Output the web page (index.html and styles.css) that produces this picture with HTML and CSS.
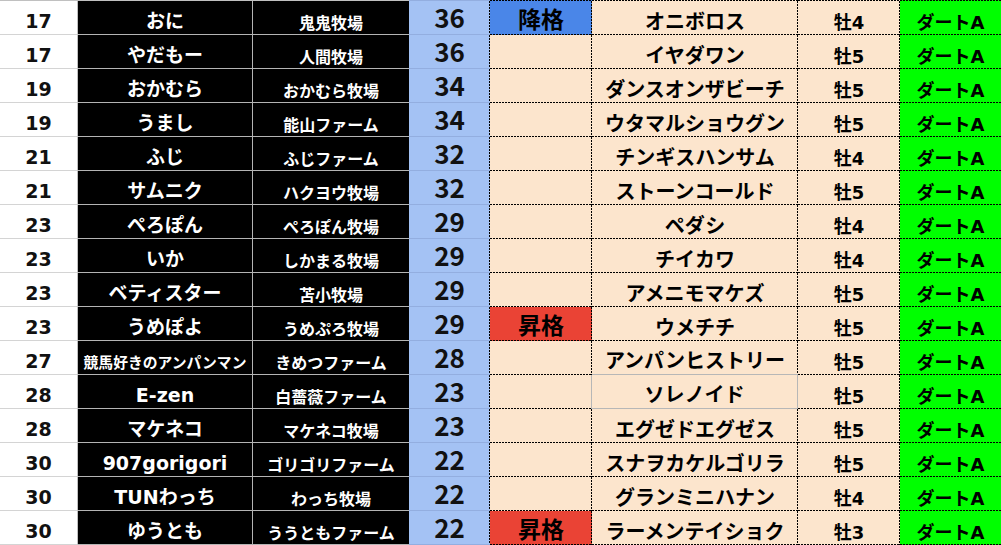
FILE: index.html
```html
<!DOCTYPE html>
<html lang="ja">
<head>
<meta charset="utf-8">
<title>ランキング</title>
<link rel="stylesheet" href="styles.css">
</head>
<body>
<div class="sheet">
  <div class="row top">
    <div class="t t1"></div><div class="t t1"></div><div class="t t1"></div><div class="t t4"></div>
    <div class="t tdash tblue"></div><div class="t tdash tpeach"></div><div class="t tdash tpeach"></div><div class="t tdash tgreen"></div>
  </div>

  <div class="row">
    <div class="c k1">17</div><div class="c k2">おに</div><div class="c k3">鬼鬼牧場</div><div class="c k4">36</div>
    <div class="c k5 down">降格</div><div class="c k6">オニボロス</div><div class="c k7">牡4</div><div class="c k8">ダートA</div>
  </div>
  <div class="row">
    <div class="c k1">17</div><div class="c k2">やだもー</div><div class="c k3">人間牧場</div><div class="c k4">36</div>
    <div class="c k5"></div><div class="c k6">イヤダワン</div><div class="c k7">牡5</div><div class="c k8">ダートA</div>
  </div>
  <div class="row">
    <div class="c k1">19</div><div class="c k2">おかむら</div><div class="c k3">おかむら牧場</div><div class="c k4">34</div>
    <div class="c k5"></div><div class="c k6">ダンスオンザビーチ</div><div class="c k7">牡5</div><div class="c k8">ダートA</div>
  </div>
  <div class="row">
    <div class="c k1">19</div><div class="c k2">うまし</div><div class="c k3">能山ファーム</div><div class="c k4">34</div>
    <div class="c k5"></div><div class="c k6">ウタマルショウグン</div><div class="c k7">牡5</div><div class="c k8">ダートA</div>
  </div>
  <div class="row">
    <div class="c k1">21</div><div class="c k2">ふじ</div><div class="c k3">ふじファーム</div><div class="c k4">32</div>
    <div class="c k5"></div><div class="c k6">チンギスハンサム</div><div class="c k7">牡4</div><div class="c k8">ダートA</div>
  </div>
  <div class="row">
    <div class="c k1">21</div><div class="c k2">サムニク</div><div class="c k3">ハクヨウ牧場</div><div class="c k4">32</div>
    <div class="c k5"></div><div class="c k6">ストーンコールド</div><div class="c k7">牡5</div><div class="c k8">ダートA</div>
  </div>
  <div class="row">
    <div class="c k1">23</div><div class="c k2">ぺろぽん</div><div class="c k3">ぺろぽん牧場</div><div class="c k4">29</div>
    <div class="c k5"></div><div class="c k6">ペダシ</div><div class="c k7">牡4</div><div class="c k8">ダートA</div>
  </div>
  <div class="row">
    <div class="c k1">23</div><div class="c k2">いか</div><div class="c k3">しかまる牧場</div><div class="c k4">29</div>
    <div class="c k5"></div><div class="c k6">チイカワ</div><div class="c k7">牡4</div><div class="c k8">ダートA</div>
  </div>
  <div class="row">
    <div class="c k1">23</div><div class="c k2">ベティスター</div><div class="c k3">苫小牧場</div><div class="c k4">29</div>
    <div class="c k5"></div><div class="c k6">アメニモマケズ</div><div class="c k7">牡5</div><div class="c k8">ダートA</div>
  </div>
  <div class="row">
    <div class="c k1">23</div><div class="c k2">うめぽよ</div><div class="c k3">うめぷろ牧場</div><div class="c k4">29</div>
    <div class="c k5 up">昇格</div><div class="c k6">ウメチチ</div><div class="c k7">牡5</div><div class="c k8">ダートA</div>
  </div>
  <div class="row">
    <div class="c k1">27</div><div class="c k2 small">競馬好きのアンパンマン</div><div class="c k3">きめつファーム</div><div class="c k4">28</div>
    <div class="c k5"></div><div class="c k6 gray-bottom">アンパンヒストリー</div><div class="c k7">牡5</div><div class="c k8">ダートA</div>
  </div>
  <div class="row">
    <div class="c k1">28</div><div class="c k2">E-zen</div><div class="c k3">白薔薇ファーム</div><div class="c k4">23</div>
    <div class="c k5 gray-right"></div><div class="c k6 solid">ソレノイド</div><div class="c k7">牡5</div><div class="c k8">ダートA</div>
  </div>
  <div class="row">
    <div class="c k1">28</div><div class="c k2">マケネコ</div><div class="c k3">マケネコ牧場</div><div class="c k4">23</div>
    <div class="c k5"></div><div class="c k6">エグゼドエグゼス</div><div class="c k7">牡5</div><div class="c k8">ダートA</div>
  </div>
  <div class="row">
    <div class="c k1">30</div><div class="c k2">907gorigori</div><div class="c k3">ゴリゴリファーム</div><div class="c k4">22</div>
    <div class="c k5"></div><div class="c k6">スナヲカケルゴリラ</div><div class="c k7">牡5</div><div class="c k8">ダートA</div>
  </div>
  <div class="row">
    <div class="c k1">30</div><div class="c k2">TUNわっち</div><div class="c k3">わっち牧場</div><div class="c k4">22</div>
    <div class="c k5"></div><div class="c k6">グランミニハナン</div><div class="c k7">牡4</div><div class="c k8">ダートA</div>
  </div>
  <div class="row">
    <div class="c k1">30</div><div class="c k2">ゆうとも</div><div class="c k3">ううともファーム</div><div class="c k4">22</div>
    <div class="c k5 up">昇格</div><div class="c k6">ラーメンテイショク</div><div class="c k7">牡3</div><div class="c k8">ダートA</div>
  </div>
</div>
</body>
</html>
```

FILE: styles.css
```css
* {
  box-sizing: border-box;
  margin: 0;
  padding: 0;
}

html, body {
  background: #ffffff;
}

body {
  width: 1001px;
  height: 545px;
  overflow: hidden;
  font-family: "DejaVu Sans", "Noto Sans CJK JP", sans-serif;
  font-weight: 700;
  color: #000000;
}

.sheet {
  display: flex;
  flex-direction: column;
}

.row {
  display: grid;
  grid-template-columns: 78px 175px 156px 81px 102px 206px 102px 101px;
  height: 34px;
}

.row.top {
  height: 1px;
}

/* top grid line */
.t1 { background: #c0c0c0; }
.t4 { background: #93aee0; }
.tdash {
  background-image: repeating-linear-gradient(90deg, #000 0 2px, transparent 2px 3px);
}
.tblue { background-color: #4a86e8; }
.tpeach { background-color: #fce5cd; }
.tgreen { background-color: #00ff00; }

/* cells */
.c {
  display: flex;
  align-items: flex-end;
  justify-content: center;
  padding-bottom: 3px;
  line-height: 1;
  white-space: nowrap;
  background-repeat: no-repeat;
}

.k1 {
  background-color: #ffffff;
  border-right: 1px solid #c0c0c0;
  border-bottom: 1px solid #d4d4d4;
  font-size: 19px;
  color: #111111;
}

.k2 {
  background-color: #000000;
  color: #ffffff;
  border-right: 1px solid #b4b4b4;
  border-bottom: 1px solid #b4b4b4;
  font-size: 19px;
}

.k2.small {
  font-size: 14.8px;
}

.k3 {
  background-color: #000000;
  color: #ffffff;
  border-bottom: 1px solid #b4b4b4;
  font-size: 16px;
  padding-bottom: 2px;
}

.k4 {
  background-color: #a4c2f4;
  border-bottom: 1px solid #93aee0;
  background-image: repeating-linear-gradient(180deg, #000 0 2px, transparent 2px 3px);
  background-size: 1px 100%;
  background-position: 100% 0;
  font-family: "Noto Sans CJK JP", sans-serif;
  font-size: 26px;
  font-weight: 700;
  padding-bottom: 4px;
  color: #111111;
}

.k5, .k6, .k7 {
  background-color: #fce5cd;
  background-image:
    repeating-linear-gradient(90deg, #000 0 2px, transparent 2px 3px),
    repeating-linear-gradient(180deg, #000 0 2px, transparent 2px 3px);
  background-size: 100% 1px, 1px 100%;
  background-position: 0 100%, 100% 0;
}

.k5 {
  font-size: 23px;
}

.k6 {
  font-size: 20px;
}

.k7 {
  font-size: 18px;
}

.k8 {
  background-color: #00ff00;
  background-image: repeating-linear-gradient(90deg, #000 0 2px, transparent 2px 3px);
  background-size: 100% 1px;
  background-position: 0 100%;
  font-size: 18px;
}

.k5.down {
  background-color: #4a86e8;
}

.k5.up {
  background-color: #ea4335;
}

/* solid grey outline around one cell */
.k6.solid {
  background-image: none;
  border-right: 1px solid #b7b7b7;
  border-bottom: 1px solid #b7b7b7;
}

.k6.gray-bottom {
  background-image: repeating-linear-gradient(180deg, #000 0 2px, transparent 2px 3px);
  background-size: 1px 100%;
  background-position: 100% 0;
  border-bottom: 1px solid #b7b7b7;
}

.k5.gray-right {
  background-image: repeating-linear-gradient(90deg, #000 0 2px, transparent 2px 3px);
  background-size: 100% 1px;
  background-position: 0 100%;
  border-right: 1px solid #b7b7b7;
}
```
